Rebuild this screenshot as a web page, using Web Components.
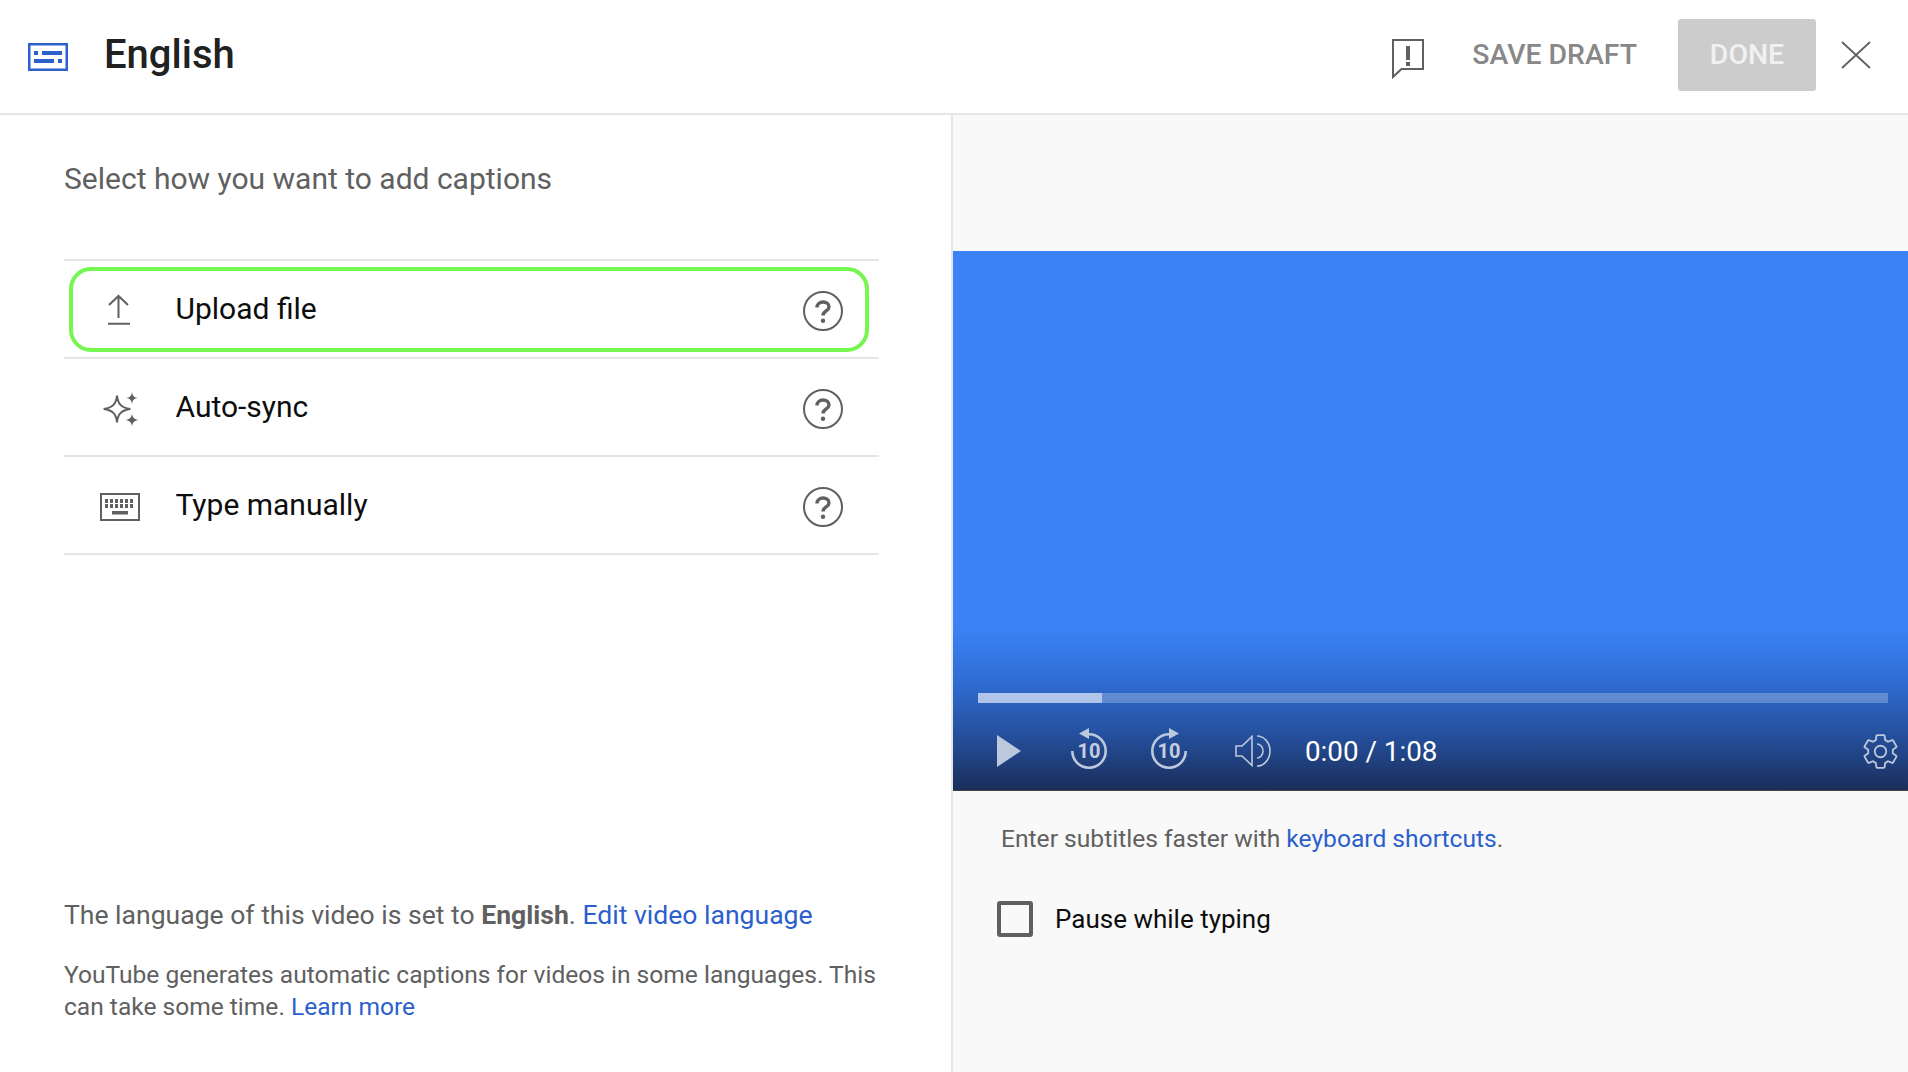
<!DOCTYPE html>
<html lang="en">
<head>
<meta charset="utf-8">
<title>Captions</title>
<style>
  html, body { margin: 0; height: 100%; background: #fff; }
  body { font-family: Roboto, "Liberation Sans", sans-serif; overflow: hidden; }
</style>
</head>
<body>
<caption-editor></caption-editor>

<script>
const ICONS = {
  upload: `<path d="M10 8 19.5-1 29 8M19.5-1V21M9 26.7H31" fill="none" stroke="#606060" stroke-width="2"/>`,
  sparkle: `<g transform="translate(1 0)"><path d="M17 .7c.8 8 4 12 13.3 13.3-9.3 1.3-12.5 5.300-13.3 13.3-.8-8-4-12-13.3-13.3 9.300-1.3 12.500-5.300 13.300-13.300z" fill="none" stroke="#606060" stroke-width="2"/>
    <path d="M32-3c.5 3.800 2.200 5.500 6 6-3.800.5-5.500 2.200-6 6-.5-3.800-2.200-5.500-6-6 3.800-.5 5.500-2.200 6-6zM32 18.500c.5 4.100 2.400 6 6.500 6.500-4.100.5-6 2.400-6.500 6.500-.5-4.100-2.400-6-6.500-6.500 4.100-.5 6-2.400 6.500-6.500z" fill="#606060"/></g>`,
  keyboard: `<rect x="2" y="1" width="38" height="26" fill="none" stroke="#606060" stroke-width="2"/>
    <path d="M6 8h29M6 13h29" stroke="#606060" stroke-width="4" stroke-dasharray="3 2"/>
    <rect x="13" y="18" width="16" height="3.5" fill="#606060"/>`
};

class captionHeader extends HTMLElement {
  constructor() {
    super();
    this.attachShadow({ mode: 'open' });
  }

  connectedCallback() {
    this.shadowRoot.innerHTML = `
      <style>
        :host {
          display: flex;
          align-items: center;
          box-sizing: border-box;
          height: 115px;
          padding: 0 37px 4px 28px;
          border-bottom: 2px solid #e5e5e5;
          background: #fff;
        }
        .cc { display: block; width: 40px; height: 28px; margin-top: 5px; }
        h1 {
          margin: 0 0 0 36px;
          font-size: 40px;
          line-height: 48px;
          font-weight: 500;
          color: #212121;
        }
        .flag { display: block; width: 32px; height: 40px; margin-left: auto; margin-top: 9px; }
        .save {
          margin-left: 48px;
          font-size: 28.4px;
          font-weight: 500;
          color: #888;
        }
        .done {
          display: flex;
          align-items: center;
          justify-content: center;
          width: 138px;
          height: 72px;
          margin-left: 41px;
          border-radius: 3px;
          background: #ccc;
          color: #f1f1f1;
          font-size: 28.4px;
          font-weight: 500;
        }
        .close { display: block; width: 30px; height: 28px; margin-left: 25px; margin-top: 1px; }
      </style>
      <svg class="cc" viewBox="0 0 40 28">
        <rect x="1.25" y="1.25" width="37.5" height="25.5" fill="none" stroke="#2b5fce" stroke-width="2.5"/>
        <path d="M6 10h4M14 10h20M6 18h20M30 18h4" stroke="#2b5fce" stroke-width="4"/>
      </svg>
      <h1><slot></slot></h1>
      <svg class="flag" viewBox="0 0 32 40">
        <path d="M1 38V1h30v29H9.500z" fill="none" stroke="#606060" stroke-width="2"/>
        <path d="M16 7v14M16 23v4" stroke="#606060" stroke-width="4"/>
      </svg>
      <span class="save">SAVE DRAFT</span>
      <span class="done">DONE</span>
      <svg class="close" viewBox="0 0 30 28">
        <path d="M1 1 29 27M29 1 1 27" fill="none" stroke="#606060" stroke-width="1.8"/>
      </svg>
    `;
  }
}
customElements.define('caption-header', captionHeader);

class captionOption extends HTMLElement {
  constructor() {
    super();
    this.attachShadow({ mode: 'open' });
  }

  connectedCallback() {
    const icon = ICONS[this.getAttribute('icon')];
    this.shadowRoot.innerHTML = `
      <style>
        :host {
          display: block;
          padding: 6px 10px 5px 5px;
          border-bottom: 2px solid #e5e5e5;
        }
        .ring {
          display: flex;
          align-items: center;
          box-sizing: border-box;
          height: 85px;
          padding: 0 22px 0 23px;
          border: 4px solid transparent;
          border-radius: 22px;
        }
        :host([focused]) .ring { border-color: #76f650; }
        .icon { display: block; width: 46px; height: 46px; margin-top: 3px; overflow: visible; }
        .label {
          flex: 1;
          margin-left: 33.5px;
          margin-top: -2px;
          font-size: 30px;
          color: #0d0d0d;
        }
        .help { display: block; width: 40px; height: 40px; margin-top: 3px; }
      </style>
      <div class="ring">
        <svg class="icon" viewBox="-3 -9 46 46">${icon}</svg>
        <span class="label"><slot></slot></span>
        <svg class="help" viewBox="0 0 40 40">
          <circle cx="20" cy="20" r="19" fill="none" stroke="#606060" stroke-width="2"/>
          <path d="M14 16.5C14 13 16.7 11 20 11s6 2 6 5c0 4-6 4-6 8.500" fill="none" stroke="#606060" stroke-width="3.4"/>
          <circle cx="20" cy="29.7" r="2.2" fill="#606060"/>
        </svg>
      </div>
    `;
  }
}
customElements.define('caption-option', captionOption);

class captionMethods extends HTMLElement {
  constructor() {
    super();
    this.attachShadow({ mode: 'open' });
  }

  connectedCallback() {
    this.shadowRoot.innerHTML = `
      <style>
        :host {
          display: flex;
          flex-direction: column;
          box-sizing: border-box;
          height: 100%;
          padding: 44px 0 49px 64px;
          border-right: 2px solid #e5e5e5;
          background: #fff;
          color: #606060;
        }
        h2 {
          margin: 0 0 60px;
          font-size: 30px;
          line-height: 40px;
          font-weight: 400;
        }
        .list {
          width: 815px;
          border-top: 2px solid #e5e5e5;
        }
        .foot { margin-top: auto; width: 830px; }
        a { color: #2b5fce; text-decoration: none; }
        .lang {
          margin: 0 0 26px;
          font-size: 26.55px;
          line-height: 36px;
        }
        .lang b { font-weight: 700; }
        .note {
          margin: 0;
          font-size: 24.56px;
          line-height: 32px;
        }
      </style>
      <h2>Select how you want to add captions</h2>
      <div class="list">
        <caption-option icon="upload" focused>Upload file</caption-option>
        <caption-option icon="sparkle">Auto-sync</caption-option>
        <caption-option icon="keyboard">Type manually</caption-option>
      </div>
      <div class="foot">
        <p class="lang">The language of this video is set to <b>English</b>. <a href="#">Edit video language</a></p>
        <p class="note">YouTube generates automatic captions for videos in some languages. This<br>can take some time. <a href="#">Learn more</a></p>
      </div>
    `;
  }
}
customElements.define('caption-methods', captionMethods);

class videoPlayer extends HTMLElement {
  constructor() {
    super();
    this.attachShadow({ mode: 'open' });
  }

  connectedCallback() {
    this.shadowRoot.innerHTML = `
      <style>
        :host {
          display: flex;
          flex-direction: column;
          justify-content: flex-end;
          box-sizing: border-box;
          height: 540px;
          border-bottom: 1px solid #444;
          background: linear-gradient(to bottom, #3b82f6 0, #3b82f6 70%, #2f6cd2 80%, #254f9c 90%, #1a2e5a 100%);
        }
        .track {
          display: flex;
          height: 10px;
          margin: 0 20px 9px 25px;
          background: rgba(255, 255, 255, .25);
        }
        .played {
          width: 124px;
          background: rgba(255, 255, 255, .5);
        }
        .controls {
          display: flex;
          align-items: center;
          height: 78px;
          padding: 0 7px 0 44px;
        }
        svg { display: block; }
        .play { width: 24px; height: 32px; }
        .skip { width: 36px; height: 46px; }
        .back { margin-left: 50px; }
        .fwd { margin-left: 44px; }
        .vol { width: 36px; height: 32px; margin-left: 48px; }
        .time {
          margin-left: 34px;
          font-size: 27.8px;
          color: #fff;
        }
        .gear { width: 41px; height: 41px; margin-left: auto; }
        text { font: 700 20px Roboto, sans-serif; fill: #c4cee0; }
      </style>
      <div class="track"><div class="played"></div></div>
      <div class="controls">
        <svg class="play" viewBox="0 0 24 32"><path d="M0 0 24 16 0 32z" fill="#bcc8dc"/></svg>
        <svg class="skip back" viewBox="0 -2 36 46">
          <path d="M1.3 21a16.700 16.700 0 1 0 16.700-16.700" fill="none" stroke="#bcc8dc" stroke-width="2.6"/>
          <path d="M18-2 8 3.500 18 9z" fill="#bcc8dc"/>
          <text x="18" y="28.300" text-anchor="middle">10</text>
        </svg>
        <svg class="skip fwd" viewBox="0 -2 36 46">
          <path d="M34.700 21a16.700 16.700 0 1 1-16.700-16.700" fill="none" stroke="#bcc8dc" stroke-width="2.6"/>
          <path d="M18-2l10 5.500L18 9z" fill="#bcc8dc"/>
          <text x="18" y="28.300" text-anchor="middle">10</text>
        </svg>
        <svg class="vol" viewBox="0 0 36 32">
          <path d="M1 11h6l10-9.500v29L7 21H1z" fill="none" stroke="#bcc8dc" stroke-width="1.6"/>
          <path d="M22 9a6 7 0 0 1 0 14M22 1a13 15 0 0 1 0 30" fill="none" stroke="#bcc8dc" stroke-width="1.6"/>
        </svg>
        <span class="time">0:00 / 1:08</span>
        <svg class="gear" viewBox="-.5 -.5 25 25">
          <path d="M19.43 12.98c.04-.32.07-.64.07-.98 0-.34-.03-.66-.07-.98l2.11-1.65c.19-.15.24-.42.12-.64l-2-3.46c-.09-.16-.26-.25-.44-.25-.06 0-.12.01-.17.03l-2.49 1c-.52-.4-1.08-.73-1.69-.98l-.38-2.65C14.46 2.18 14.25 2 14 2h-4c-.25 0-.46.18-.49.42l-.38 2.65c-.61.25-1.17.59-1.69.98l-2.49-1c-.06-.02-.12-.03-.18-.03-.17 0-.34.09-.43.25l-2 3.46c-.13.22-.07.49.12.64l2.11 1.65c-.04.32-.07.65-.07.98 0 .33.03.66.07.98l-2.11 1.65c-.19.15-.24.42-.12.64l2 3.46c.09.16.26.25.44.25.06 0 .12-.01.17-.03l2.49-1c.52.4 1.08.73 1.69.98l.38 2.65c.03.24.24.42.49.42h4c.25 0 .46-.18.49-.42l.38-2.65c.61-.25 1.17-.59 1.69-.98l2.49 1c.06.02.12.03.18.03.17 0 .34-.09.43-.25l2-3.46c.12-.22.07-.49-.12-.64l-2.11-1.65z" fill="none" stroke="#bcc8dc" stroke-width="1.1"/>
          <circle cx="12" cy="12" r="3.5" fill="none" stroke="#bcc8dc" stroke-width="1.1"/>
        </svg>
      </div>
    `;
  }
}
customElements.define('video-player', videoPlayer);

class previewPane extends HTMLElement {
  constructor() {
    super();
    this.attachShadow({ mode: 'open' });
  }

  connectedCallback() {
    this.shadowRoot.innerHTML = `
      <style>
        :host {
          display: block;
          height: 100%;
          padding-top: 136px;
          box-sizing: border-box;
          background: #f9f9f9;
        }
        .hint {
          margin: 32px 0 0 48px;
          font-size: 24.6px;
          line-height: 32px;
          color: #606060;
        }
        a { color: #2b5fce; text-decoration: none; }
        .pause {
          display: flex;
          align-items: center;
          height: 36px;
          margin: 46px 0 0 44px;
          font-size: 26px;
          line-height: 34px;
          color: #0d0d0d;
        }
        .box {
          box-sizing: border-box;
          width: 36px;
          height: 36px;
          margin-right: 22px;
          border: 4px solid #606060;
          border-radius: 3px;
        }
      </style>
      <video-player></video-player>
      <p class="hint">Enter subtitles faster with <a href="#">keyboard shortcuts</a>.</p>
      <div class="pause"><span class="box"></span><span>Pause while typing</span></div>
    `;
  }
}
customElements.define('preview-pane', previewPane);

class captionEditor extends HTMLElement {
  constructor() {
    super();
    this.attachShadow({ mode: 'open' });
  }

  connectedCallback() {
    this.shadowRoot.innerHTML = `
      <style>
        :host {
          display: flex;
          flex-direction: column;
          height: 1072px;
        }
        main {
          flex: 1;
          display: grid;
          grid-template-columns: 953px 1fr;
          min-height: 0;
        }
      </style>
      <caption-header>English</caption-header>
      <main>
        <caption-methods></caption-methods>
        <preview-pane></preview-pane>
      </main>
    `;
  }
}
customElements.define('caption-editor', captionEditor);
</script>
</body>
</html>
